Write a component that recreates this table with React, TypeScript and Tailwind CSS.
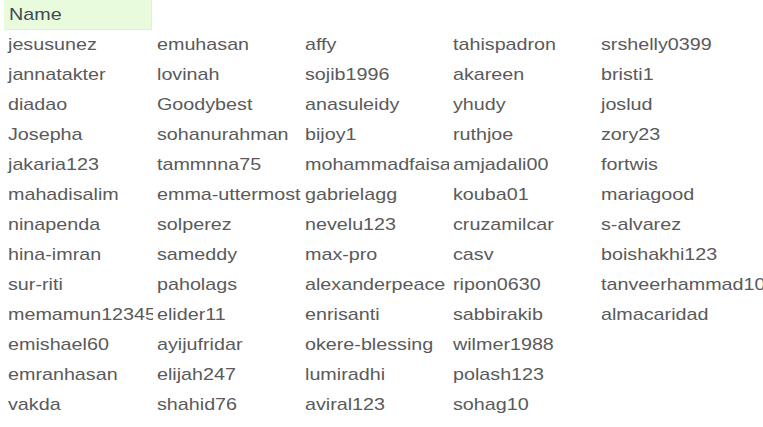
import React from "react";

const rows: string[][] = [
  ["jesusunez", "emuhasan", "affy", "tahispadron", "srshelly0399"],
  ["jannatakter", "lovinah", "sojib1996", "akareen", "bristi1"],
  ["diadao", "Goodybest", "anasuleidy", "yhudy", "joslud"],
  ["Josepha", "sohanurahman", "bijoy1", "ruthjoe", "zory23"],
  ["jakaria123", "tammnna75", "mohammadfaisal", "amjadali00", "fortwis"],
  ["mahadisalim", "emma-uttermost", "gabrielagg", "kouba01", "mariagood"],
  ["ninapenda", "solperez", "nevelu123", "cruzamilcar", "s-alvarez"],
  ["hina-imran", "sameddy", "max-pro", "casv", "boishakhi123"],
  ["sur-riti", "paholags", "alexanderpeace", "ripon0630", "tanveerhammad10"],
  ["memamun12345", "elider11", "enrisanti", "sabbirakib", "almacaridad"],
  ["emishael60", "ayijufridar", "okere-blessing", "wilmer1988", ""],
  ["emranhasan", "elijah247", "lumiradhi", "polash123", ""],
  ["vakda", "shahid76", "aviral123", "sohag10", ""],
];

export default function App() {
  return (
    <div
      className="w-[763px] h-[427px] bg-white overflow-hidden pl-[4px]"
      style={{ fontFamily: '"Liberation Sans", Arial, sans-serif' }}
    >
      <div className="w-[148px] h-[30px] bg-[#e9fbdd] border-b border-r border-[#dcf3cc] flex items-center pl-[5px] text-[17px] text-[#3e4a55] overflow-hidden">
        <span className="inline-block scale-x-[1.16] origin-left whitespace-nowrap">Name</span>
      </div>
      <div className="grid grid-cols-[149px_148px_148px_148px_1fr] text-[17px] text-[#5a5a5a]">
        {rows.flat().map((name, i) => (
          <div
            key={i}
            className="h-[30px] flex items-center pl-[4px] overflow-hidden whitespace-nowrap"
          >
            <span className="inline-block scale-x-[1.16] origin-left">{name}</span>
          </div>
        ))}
      </div>
    </div>
  );
}
